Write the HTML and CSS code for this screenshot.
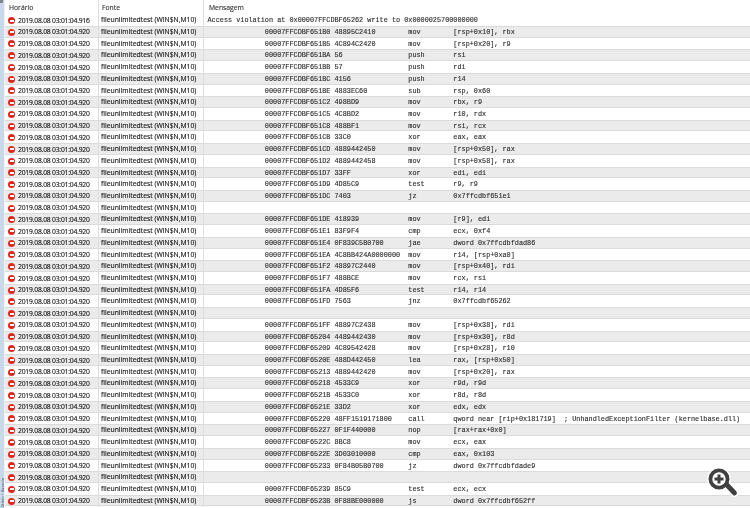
FILE: index.html
```html
<!DOCTYPE html>
<html lang="pt">
<head>
<meta charset="utf-8">
<title>Diário</title>
<link rel="stylesheet" href="styles.css">
</head>
<body>
<div class="app">
<aside class="strip"><span class="tab">Diário | Agenda</span></aside>
<main class="log">
<div class="row head"><div class="c1">Horário</div><div class="c2">Fonte</div><div class="c3">Mensagem</div></div>
<div class="row"><div class="c1"><i class="ico"></i>2019.08.08 03:01:04.916</div><div class="c2">fileunlimitedtest (WIN$N,M10)</div><pre class="c3">Access violation at 0x00007FFCDBF65262 write to 0x0000025700000000</pre></div>
<div class="row"><div class="c1"><i class="ico"></i>2019.08.08 03:01:04.920</div><div class="c2">fileunlimitedtest (WIN$N,M10)</div><pre class="c3">              00007FFCDBF651B0 48895C2410        mov        [rsp+0x10], rbx</pre></div>
<div class="row"><div class="c1"><i class="ico"></i>2019.08.08 03:01:04.920</div><div class="c2">fileunlimitedtest (WIN$N,M10)</div><pre class="c3">              00007FFCDBF651B5 4C894C2420        mov        [rsp+0x20], r9</pre></div>
<div class="row"><div class="c1"><i class="ico"></i>2019.08.08 03:01:04.920</div><div class="c2">fileunlimitedtest (WIN$N,M10)</div><pre class="c3">              00007FFCDBF651BA 56                push       rsi</pre></div>
<div class="row"><div class="c1"><i class="ico"></i>2019.08.08 03:01:04.920</div><div class="c2">fileunlimitedtest (WIN$N,M10)</div><pre class="c3">              00007FFCDBF651BB 57                push       rdi</pre></div>
<div class="row"><div class="c1"><i class="ico"></i>2019.08.08 03:01:04.920</div><div class="c2">fileunlimitedtest (WIN$N,M10)</div><pre class="c3">              00007FFCDBF651BC 4156              push       r14</pre></div>
<div class="row"><div class="c1"><i class="ico"></i>2019.08.08 03:01:04.920</div><div class="c2">fileunlimitedtest (WIN$N,M10)</div><pre class="c3">              00007FFCDBF651BE 4883EC60          sub        rsp, 0x60</pre></div>
<div class="row"><div class="c1"><i class="ico"></i>2019.08.08 03:01:04.920</div><div class="c2">fileunlimitedtest (WIN$N,M10)</div><pre class="c3">              00007FFCDBF651C2 498BD9            mov        rbx, r9</pre></div>
<div class="row"><div class="c1"><i class="ico"></i>2019.08.08 03:01:04.920</div><div class="c2">fileunlimitedtest (WIN$N,M10)</div><pre class="c3">              00007FFCDBF651C5 4C8BD2            mov        r10, rdx</pre></div>
<div class="row"><div class="c1"><i class="ico"></i>2019.08.08 03:01:04.920</div><div class="c2">fileunlimitedtest (WIN$N,M10)</div><pre class="c3">              00007FFCDBF651C8 488BF1            mov        rsi, rcx</pre></div>
<div class="row"><div class="c1"><i class="ico"></i>2019.08.08 03:01:04.920</div><div class="c2">fileunlimitedtest (WIN$N,M10)</div><pre class="c3">              00007FFCDBF651CB 33C0              xor        eax, eax</pre></div>
<div class="row"><div class="c1"><i class="ico"></i>2019.08.08 03:01:04.920</div><div class="c2">fileunlimitedtest (WIN$N,M10)</div><pre class="c3">              00007FFCDBF651CD 4889442450        mov        [rsp+0x50], rax</pre></div>
<div class="row"><div class="c1"><i class="ico"></i>2019.08.08 03:01:04.920</div><div class="c2">fileunlimitedtest (WIN$N,M10)</div><pre class="c3">              00007FFCDBF651D2 4889442458        mov        [rsp+0x58], rax</pre></div>
<div class="row"><div class="c1"><i class="ico"></i>2019.08.08 03:01:04.920</div><div class="c2">fileunlimitedtest (WIN$N,M10)</div><pre class="c3">              00007FFCDBF651D7 33FF              xor        edi, edi</pre></div>
<div class="row"><div class="c1"><i class="ico"></i>2019.08.08 03:01:04.920</div><div class="c2">fileunlimitedtest (WIN$N,M10)</div><pre class="c3">              00007FFCDBF651D9 4D85C9            test       r9, r9</pre></div>
<div class="row"><div class="c1"><i class="ico"></i>2019.08.08 03:01:04.920</div><div class="c2">fileunlimitedtest (WIN$N,M10)</div><pre class="c3">              00007FFCDBF651DC 7403              jz         0x7ffcdbf651e1</pre></div>
<div class="row"><div class="c1"><i class="ico"></i>2019.08.08 03:01:04.920</div><div class="c2">fileunlimitedtest (WIN$N,M10)</div><pre class="c3"> </pre></div>
<div class="row"><div class="c1"><i class="ico"></i>2019.08.08 03:01:04.920</div><div class="c2">fileunlimitedtest (WIN$N,M10)</div><pre class="c3">              00007FFCDBF651DE 418939            mov        [r9], edi</pre></div>
<div class="row"><div class="c1"><i class="ico"></i>2019.08.08 03:01:04.920</div><div class="c2">fileunlimitedtest (WIN$N,M10)</div><pre class="c3">              00007FFCDBF651E1 83F9F4            cmp        ecx, 0xf4</pre></div>
<div class="row"><div class="c1"><i class="ico"></i>2019.08.08 03:01:04.920</div><div class="c2">fileunlimitedtest (WIN$N,M10)</div><pre class="c3">              00007FFCDBF651E4 0F839C5B0700      jae        dword 0x7ffcdbfdad86</pre></div>
<div class="row"><div class="c1"><i class="ico"></i>2019.08.08 03:01:04.920</div><div class="c2">fileunlimitedtest (WIN$N,M10)</div><pre class="c3">              00007FFCDBF651EA 4C8BB424A0000000  mov        r14, [rsp+0xa0]</pre></div>
<div class="row"><div class="c1"><i class="ico"></i>2019.08.08 03:01:04.920</div><div class="c2">fileunlimitedtest (WIN$N,M10)</div><pre class="c3">              00007FFCDBF651F2 48897C2440        mov        [rsp+0x40], rdi</pre></div>
<div class="row"><div class="c1"><i class="ico"></i>2019.08.08 03:01:04.920</div><div class="c2">fileunlimitedtest (WIN$N,M10)</div><pre class="c3">              00007FFCDBF651F7 488BCE            mov        rcx, rsi</pre></div>
<div class="row"><div class="c1"><i class="ico"></i>2019.08.08 03:01:04.920</div><div class="c2">fileunlimitedtest (WIN$N,M10)</div><pre class="c3">              00007FFCDBF651FA 4D85F6            test       r14, r14</pre></div>
<div class="row"><div class="c1"><i class="ico"></i>2019.08.08 03:01:04.920</div><div class="c2">fileunlimitedtest (WIN$N,M10)</div><pre class="c3">              00007FFCDBF651FD 7563              jnz        0x7ffcdbf65262</pre></div>
<div class="row"><div class="c1"><i class="ico"></i>2019.08.08 03:01:04.920</div><div class="c2">fileunlimitedtest (WIN$N,M10)</div><pre class="c3"> </pre></div>
<div class="row"><div class="c1"><i class="ico"></i>2019.08.08 03:01:04.920</div><div class="c2">fileunlimitedtest (WIN$N,M10)</div><pre class="c3">              00007FFCDBF651FF 48897C2438        mov        [rsp+0x38], rdi</pre></div>
<div class="row"><div class="c1"><i class="ico"></i>2019.08.08 03:01:04.920</div><div class="c2">fileunlimitedtest (WIN$N,M10)</div><pre class="c3">              00007FFCDBF65204 4489442430        mov        [rsp+0x30], r8d</pre></div>
<div class="row"><div class="c1"><i class="ico"></i>2019.08.08 03:01:04.920</div><div class="c2">fileunlimitedtest (WIN$N,M10)</div><pre class="c3">              00007FFCDBF65209 4C89542428        mov        [rsp+0x28], r10</pre></div>
<div class="row"><div class="c1"><i class="ico"></i>2019.08.08 03:01:04.920</div><div class="c2">fileunlimitedtest (WIN$N,M10)</div><pre class="c3">              00007FFCDBF6520E 488D442450        lea        rax, [rsp+0x50]</pre></div>
<div class="row"><div class="c1"><i class="ico"></i>2019.08.08 03:01:04.920</div><div class="c2">fileunlimitedtest (WIN$N,M10)</div><pre class="c3">              00007FFCDBF65213 4889442420        mov        [rsp+0x20], rax</pre></div>
<div class="row"><div class="c1"><i class="ico"></i>2019.08.08 03:01:04.920</div><div class="c2">fileunlimitedtest (WIN$N,M10)</div><pre class="c3">              00007FFCDBF65218 4533C9            xor        r9d, r9d</pre></div>
<div class="row"><div class="c1"><i class="ico"></i>2019.08.08 03:01:04.920</div><div class="c2">fileunlimitedtest (WIN$N,M10)</div><pre class="c3">              00007FFCDBF6521B 4533C0            xor        r8d, r8d</pre></div>
<div class="row"><div class="c1"><i class="ico"></i>2019.08.08 03:01:04.920</div><div class="c2">fileunlimitedtest (WIN$N,M10)</div><pre class="c3">              00007FFCDBF6521E 33D2              xor        edx, edx</pre></div>
<div class="row"><div class="c1"><i class="ico"></i>2019.08.08 03:01:04.920</div><div class="c2">fileunlimitedtest (WIN$N,M10)</div><pre class="c3">              00007FFCDBF65220 48FF1519171800    call       qword near [rip+0x181719]  ; UnhandledExceptionFilter (kernelbase.dll)</pre></div>
<div class="row"><div class="c1"><i class="ico"></i>2019.08.08 03:01:04.920</div><div class="c2">fileunlimitedtest (WIN$N,M10)</div><pre class="c3">              00007FFCDBF65227 0F1F440000        nop        [rax+rax+0x0]</pre></div>
<div class="row"><div class="c1"><i class="ico"></i>2019.08.08 03:01:04.920</div><div class="c2">fileunlimitedtest (WIN$N,M10)</div><pre class="c3">              00007FFCDBF6522C 8BC8              mov        ecx, eax</pre></div>
<div class="row"><div class="c1"><i class="ico"></i>2019.08.08 03:01:04.920</div><div class="c2">fileunlimitedtest (WIN$N,M10)</div><pre class="c3">              00007FFCDBF6522E 3D03010000        cmp        eax, 0x103</pre></div>
<div class="row"><div class="c1"><i class="ico"></i>2019.08.08 03:01:04.920</div><div class="c2">fileunlimitedtest (WIN$N,M10)</div><pre class="c3">              00007FFCDBF65233 0F84B05B0700      jz         dword 0x7ffcdbfdade9</pre></div>
<div class="row"><div class="c1"><i class="ico"></i>2019.08.08 03:01:04.920</div><div class="c2">fileunlimitedtest (WIN$N,M10)</div><pre class="c3"> </pre></div>
<div class="row"><div class="c1"><i class="ico"></i>2019.08.08 03:01:04.920</div><div class="c2">fileunlimitedtest (WIN$N,M10)</div><pre class="c3">              00007FFCDBF65239 85C9              test       ecx, ecx</pre></div>
<div class="row"><div class="c1"><i class="ico"></i>2019.08.08 03:01:04.920</div><div class="c2">fileunlimitedtest (WIN$N,M10)</div><pre class="c3">              00007FFCDBF6523B 0F88BE000000      js         dword 0x7ffcdbf652ff</pre></div>
</main>
</div>
<svg class="zoom" width="44" height="44" viewBox="0 0 44 44" aria-hidden="true">
<g fill="none" stroke-linecap="round">
<path d="M26 24 L33.5 32" stroke="#fff" stroke-width="8"/>
<circle cx="18" cy="18" r="8.6" fill="#fff" stroke="#fff" stroke-width="6.5"/>
<path d="M26 24 L33.5 32" stroke="#404040" stroke-width="4.8"/>
<circle cx="18" cy="18" r="8.6" stroke="#404040" stroke-width="3.8"/>
<path d="M13.5 18 H22.5 M18 13.5 V22.5" stroke="#404040" stroke-width="3" stroke-linecap="butt"/>
</g>
</svg>
</body>
</html>
```

FILE: styles.css
```css
html, body {
  margin: 0;
  padding: 0;
  background: #fff;
  overflow: hidden;
}
.app {
  display: flex;
  width: 750px;
  height: 508px;
  overflow: hidden;
}
.strip {
  flex: 0 0 5px;
  display: flex;
  flex-direction: column;
  justify-content: space-between;
  align-items: center;
  background: #c9d8ea;
  border-right: 1px solid #eef2f7;
  box-sizing: border-box;
  overflow: hidden;
  filter: blur(0.3px);
}
.strip::before {
  content: "";
  align-self: flex-start;
  width: 3px;
  height: 3px;
  background: #7d8794;
}
.tab {
  writing-mode: vertical-rl;
  transform: rotate(180deg);
  font: 4px/5px "Open Sans", sans-serif;
  color: #4a5a70;
  white-space: nowrap;
}
.log {
  flex: 1;
  min-width: 0;
  filter: blur(0.3px);
  font: 6.8px/11.72px "Open Sans", sans-serif;
  color: #111;
  -webkit-text-stroke: 0.12px currentColor;
}
.row {
  display: grid;
  grid-template-columns: 94px 105px 1fr;
  height: 11.72px;
  box-sizing: border-box;
  white-space: nowrap;
}
.row:nth-child(odd) {
  background: #ebebeb;
  box-shadow: inset 0 0.8px 0 #d6d6d6, inset 0 -0.8px 0 #d6d6d6;
}
.row.head {
  height: 14.2px;
  line-height: 15px;
  color: #333;
  background: #fff;
  box-shadow: none;
}
.head .c1 { padding: 0 0 0 4px; letter-spacing: 0; align-items: flex-start; }
.head .c2 { padding-left: 3px; }
.head .c3 { padding: 0 0 0 5px; font-family: "Open Sans", sans-serif; font-size: 6.8px; line-height: 15px; color: #333; }
.c1 {
  display: flex;
  align-items: center;
  padding-left: 3px;
  border-right: 1px solid #dedede;
  letter-spacing: -0.22px;
}
.c2 {
  padding-left: 2px;
  border-right: 1px solid #dedede;
}
.c3 {
  margin: 0;
  padding: 1px 0 0 3.5px;
  font: 6.84px/11.72px "Liberation Mono", monospace;
  color: #2a2a2a;
  white-space: pre;
}
.ico {
  position: relative;
  flex: none;
  width: 7px;
  height: 7px;
  margin-right: 3px;
  border-radius: 50%;
  background: #e0261c;
}
.ico::after {
  content: "";
  position: absolute;
  left: 1.5px;
  top: 2.5px;
  width: 4px;
  height: 2px;
  background: #fff;
}
.zoom {
  position: absolute;
  left: 701px;
  top: 461px;
}
```
